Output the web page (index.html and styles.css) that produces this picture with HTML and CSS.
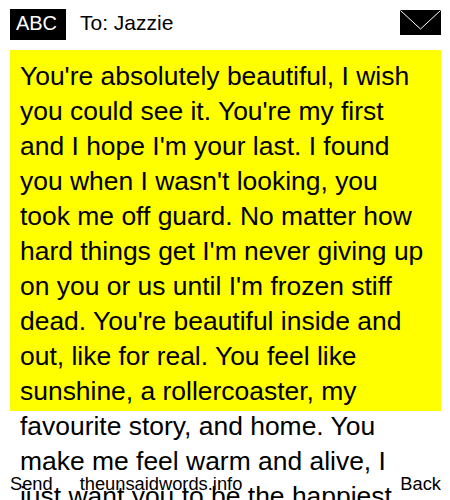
FILE: index.html
```html
<!DOCTYPE html>
<html lang="en">
<head>
<meta charset="utf-8">
<title>The Unsaid Words</title>
<link rel="stylesheet" href="styles.css">
</head>
<body>
<header class="top">
  <span class="badge">ABC</span>
  <span class="to">To: Jazzie</span>
  <svg class="mail" width="41" height="25" viewBox="0 0 41 25" aria-hidden="true">
    <rect width="41" height="25" fill="#000"/>
    <path d="M0.5 0.5L20.5 19L40.5 0.5" fill="none" stroke="#fff" stroke-width="1"/>
  </svg>
</header>
<main class="note">You're absolutely beautiful, I wish you could see it. You're my first and I hope I'm your last. I found you when I wasn't looking, you took me off guard. No matter how hard things get I'm never giving up on you or us until I'm frozen stiff dead. You're beautiful inside and out, like for real. You feel like sunshine, a rollercoaster, my favourite story, and home. You make me feel warm and alive, I just want you to be the happiest</main>
<footer class="bottom">
  <span class="send">Send</span>
  <span class="site">theunsaidwords.info</span>
  <span class="back">Back</span>
</footer>
</body>
</html>
```
FILE: styles.css
```css
html, body {
  margin: 0;
  height: 500px;
  overflow: hidden;
  background: #fff;
  color: #000;
  font-family: "Liberation Sans", Arial, sans-serif;
}
.top {
  display: flex;
  align-items: center;
  height: 50px;
  padding: 0 9px 0 10px;
  box-sizing: border-box;
  font-size: 21px;
}
.badge {
  box-sizing: border-box;
  background: #000;
  color: #fff;
  width: 56px;
  height: 31px;
  margin-top: -2px;
  padding-right: 3px;
  font-size: 20px;
  line-height: 29px;
  text-align: center;
}
.to {
  margin-left: 14px;
  margin-top: -5px;
  flex: 1;
}
.mail {
  display: block;
  margin-top: -5px;
}
.note {
  box-sizing: border-box;
  width: 431px;
  height: 361px;
  margin-left: 10px;
  padding: 9px 10px 10px;
  background: #ff0;
  font-size: 26.45px;
  line-height: 35px;
}
.bottom {
  position: absolute;
  left: 10px;
  right: 9px;
  top: 473px;
  display: flex;
  font-size: 18.3px;
  line-height: 21px;
}
.site {
  margin-left: 27px;
  flex: 1;
}
```
